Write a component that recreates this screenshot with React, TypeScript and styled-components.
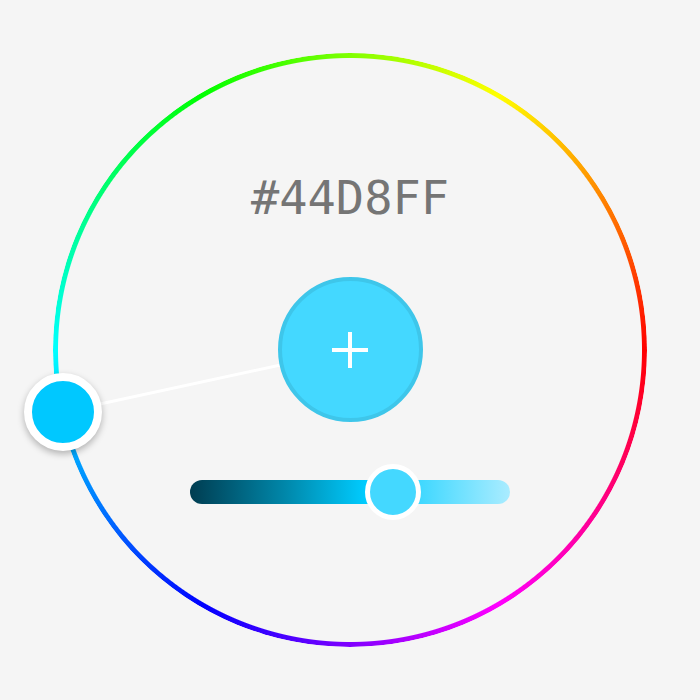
import React from 'react'
import styled, { createGlobalStyle } from 'styled-components'

const GlobalStyle = createGlobalStyle`
  html, body {
    margin: 0;
    padding: 0;
    background: #f5f5f5;
  }
`

const Stage = styled.div`
  position: relative;
  width: 700px;
  height: 700px;
  background: #f5f5f5;
  overflow: hidden;
`

const HueRing = styled.div`
  position: absolute;
  top: 53px;
  left: 53px;
  width: 594px;
  height: 594px;
  border-radius: 50%;
  background: conic-gradient(
    hsl(90, 100%, 50%) 0deg,
    hsl(60, 100%, 50%) 30deg,
    hsl(30, 100%, 50%) 60deg,
    hsl(0, 100%, 50%) 90deg,
    hsl(330, 100%, 50%) 120deg,
    hsl(300, 100%, 50%) 150deg,
    hsl(270, 100%, 50%) 180deg,
    hsl(240, 100%, 50%) 210deg,
    hsl(210, 100%, 50%) 240deg,
    hsl(180, 100%, 50%) 270deg,
    hsl(150, 100%, 50%) 300deg,
    hsl(120, 100%, 50%) 330deg,
    hsl(90, 100%, 50%) 360deg
  );
  -webkit-mask: radial-gradient(farthest-side, transparent calc(100% - 5.5px), #000 calc(100% - 4.5px));
  mask: radial-gradient(farthest-side, transparent calc(100% - 5.5px), #000 calc(100% - 4.5px));
`

const Overlay = styled.svg`
  position: absolute;
  inset: 0;
`

const Column = styled.div`
  position: relative;
  display: flex;
  flex-direction: column;
  align-items: center;
  padding-top: 174px;
`

const Hex = styled.div`
  font-family: 'DejaVu Sans Mono', monospace;
  font-size: 47px;
  line-height: 47px;
  color: #757575;
`

const AddButton = styled.button`
  margin-top: 56px;
  width: 145px;
  height: 145px;
  border-radius: 50%;
  border: 4px solid #3ec6ea;
  background: ${({ color }) => color};
  display: flex;
  align-items: center;
  justify-content: center;
  padding: 0;
`

const SliderWrap = styled.div`
  position: relative;
  margin-top: 42px;
  width: 320px;
  height: 56px;
  display: flex;
  align-items: center;
`

const Track = styled.div`
  width: 100%;
  height: 24px;
  border-radius: 12px;
  background: linear-gradient(to right, #003d51 0%, #0088ab 30%, #00ccff 55%, #aaecff 100%);
`

const Thumb = styled.div<{ pos: number; color: string }>`
  position: absolute;
  top: 0;
  left: ${({ pos }) => pos - 28}px;
  width: 56px;
  height: 56px;
  box-sizing: border-box;
  border-radius: 50%;
  border: 5px solid #fff;
  background: ${({ color }) => color};
`

const Handle = styled.div<{ x: number; y: number; color: string }>`
  position: absolute;
  left: ${({ x }) => x - 39}px;
  top: ${({ y }) => y - 39}px;
  width: 78px;
  height: 78px;
  box-sizing: border-box;
  border-radius: 50%;
  border: 8px solid #fff;
  background: ${({ color }) => color};
  box-shadow: 0 3px 7px rgba(0, 0, 0, 0.28);
`

const App = () => {
  const handle = { x: 63, y: 412 }
  return (
    <Stage>
      <GlobalStyle />
      <HueRing />
      <Overlay width="700" height="700">
        <line x1={handle.x} y1={handle.y} x2={350} y2={350} stroke="#fff" strokeWidth="3" />
      </Overlay>
      <Column>
        <Hex>#44D8FF</Hex>
        <AddButton color="#44d8ff">
          <svg width="36" height="36" viewBox="0 0 36 36">
            <path d="M18 0v36M0 18h36" stroke="#fff" strokeWidth="4" />
          </svg>
        </AddButton>
        <SliderWrap>
          <Track />
          <Thumb pos={203} color="#44d8ff" />
        </SliderWrap>
      </Column>
      <Handle x={handle.x} y={handle.y} color="#00c8ff" />
    </Stage>
  )
}

export default App
